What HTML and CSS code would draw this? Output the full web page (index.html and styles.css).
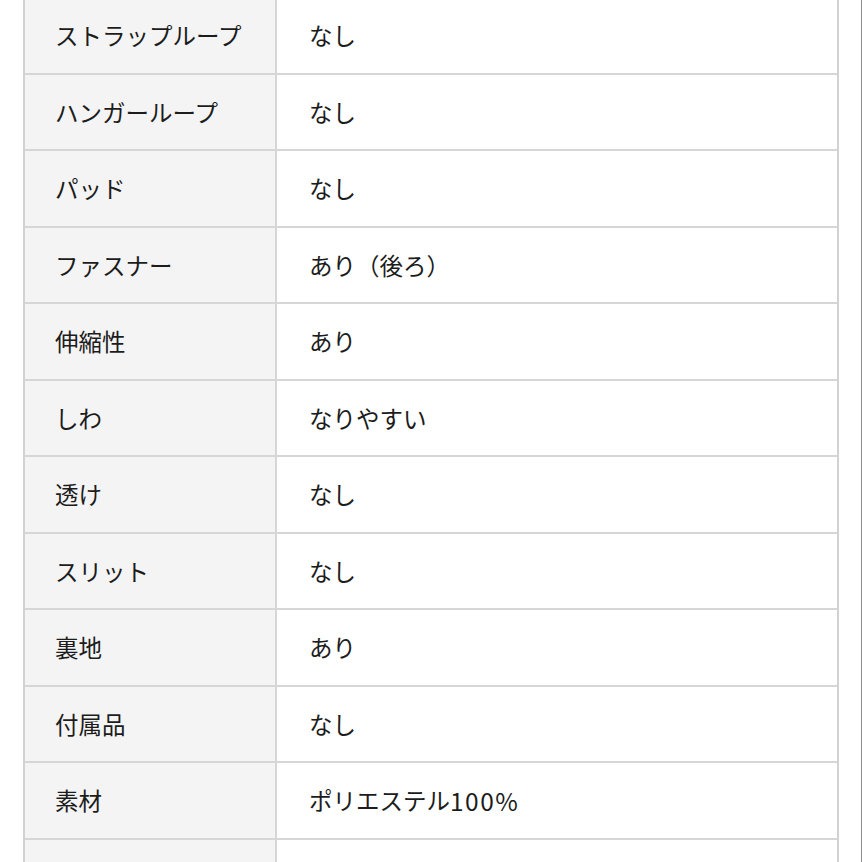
FILE: index.html
```html
<!DOCTYPE html>
<html lang="ja">
<head>
<meta charset="utf-8">
<title>商品詳細</title>
<link rel="stylesheet" href="styles.css">
</head>
<body>
<div class="page">
  <div class="spec">
    <div class="row"><div class="label">ストラップループ</div><div class="value">なし</div></div>
    <div class="row"><div class="label">ハンガーループ</div><div class="value">なし</div></div>
    <div class="row"><div class="label">パッド</div><div class="value">なし</div></div>
    <div class="row"><div class="label">ファスナー</div><div class="value">あり（後ろ）</div></div>
    <div class="row"><div class="label">伸縮性</div><div class="value">あり</div></div>
    <div class="row"><div class="label">しわ</div><div class="value">なりやすい</div></div>
    <div class="row"><div class="label">透け</div><div class="value">なし</div></div>
    <div class="row"><div class="label">スリット</div><div class="value">なし</div></div>
    <div class="row"><div class="label">裏地</div><div class="value">あり</div></div>
    <div class="row"><div class="label">付属品</div><div class="value">なし</div></div>
    <div class="row"><div class="label">素材</div><div class="value">ポリエステル<span class="num">100%</span></div></div>
    <div class="row tall"><div class="label">お手入れ</div><div class="value">手洗い可　 ドライクリーニング可（ネット使用）</div></div>
  </div>
</div>
</body>
</html>
```
FILE: styles.css
```css
html, body {
  margin: 0;
  padding: 0;
  background: #ffffff;
}

.page {
  width: 862px;
  height: 862px;
  box-sizing: border-box;
  border-right: 1px solid #8c8c8c;
  overflow: hidden;
  font-family: "Noto Sans CJK JP", "Noto Sans", sans-serif;
  font-weight: 400;
  color: #1c1c1c;
}

.spec {
  box-sizing: border-box;
  margin-top: -2px;
  margin-left: 23px;
  width: 816px;
  border-left: 2px solid #d2d2d2;
  border-right: 2px solid #d2d2d2;
}

.row {
  display: grid;
  grid-template-columns: 252px 1fr;
  height: 74.5px;
  border-bottom: 2px solid #d6d6d6;
}

.row.tall {
  height: 130px;
}

.label {
  background: #f4f4f4;
  border-right: 2px solid #d6d6d6;
  display: flex;
  align-items: center;
  padding-left: 30px;
  font-size: 23.5px;
}

.value {
  display: flex;
  align-items: center;
  padding-left: 32px;
  padding-right: 40px;
  font-size: 23.5px;
}

.num {
  font-size: 24.5px;
  letter-spacing: 1.5px;
}

.row.tall .label,
.row.tall .value {
  align-items: flex-start;
  padding-top: 16px;
  line-height: 40px;
}
```
